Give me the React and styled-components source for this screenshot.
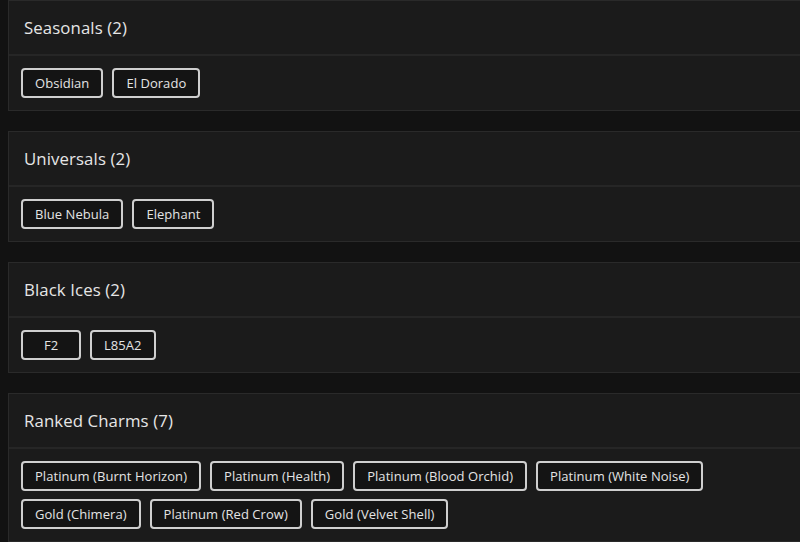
import React from "react";
import styled, { createGlobalStyle } from "styled-components";

const Global = createGlobalStyle`
  html, body { margin: 0; padding: 0; background: #121212; overflow: hidden; }
  body { font-family: "Open Sans", "DejaVu Sans", sans-serif; }
`;

const Page = styled.div`
  display: flex;
  flex-direction: column;
  gap: 20px;
  padding: 0 0 0 8px;
  width: 820px;
`;

const Card = styled.section`
  background: #1b1b1b;
  border: 1px solid #2a2a2a;
`;

const Header = styled.div`
  height: 53px;
  display: flex;
  align-items: center;
  padding-left: 15px;
  border-bottom: 2px solid #262626;
`;

const Title = styled.h2`
  margin: 0;
  font-size: 16.8px;
  font-weight: 500;
  color: #e6e6e6;
  letter-spacing: 0.1px;
`;

const Body = styled.div`
  display: flex;
  flex-wrap: wrap;
  gap: 8px 9px;
  padding: 12px 12px 12px;
  width: 770px;
`;

const Chip = styled.span`
  display: inline-flex;
  align-items: center;
  justify-content: center;
  height: 30px;
  box-sizing: border-box;
  padding: 0 12px;
  min-width: ${(p) => (p.$wide ? "60px" : "auto")};
  border: 2px solid #cfcfcf;
  border-radius: 4px;
  background: #141414;
  color: #e4e4e4;
  font-size: 13px;
  letter-spacing: 0.05px;
`;

const groups = [
  { title: "Seasonals", items: ["Obsidian", "El Dorado"] },
  { title: "Universals", items: ["Blue Nebula", "Elephant"] },
  { title: "Black Ices", items: ["F2", "L85A2"], wide: true },
  {
    title: "Ranked Charms",
    items: [
      "Platinum (Burnt Horizon)",
      "Platinum (Health)",
      "Platinum (Blood Orchid)",
      "Platinum (White Noise)",
      "Gold (Chimera)",
      "Platinum (Red Crow)",
      "Gold (Velvet Shell)",
    ],
  },
];

export default function App() {
  return (
    <>
      <Global />
      <Page>
        {groups.map((g) => (
          <Card key={g.title}>
            <Header>
              <Title>
                {g.title} ({g.items.length})
              </Title>
            </Header>
            <Body>
              {g.items.map((it) => (
                <Chip key={it} $wide={g.wide}>
                  {it}
                </Chip>
              ))}
            </Body>
          </Card>
        ))}
      </Page>
    </>
  );
}
